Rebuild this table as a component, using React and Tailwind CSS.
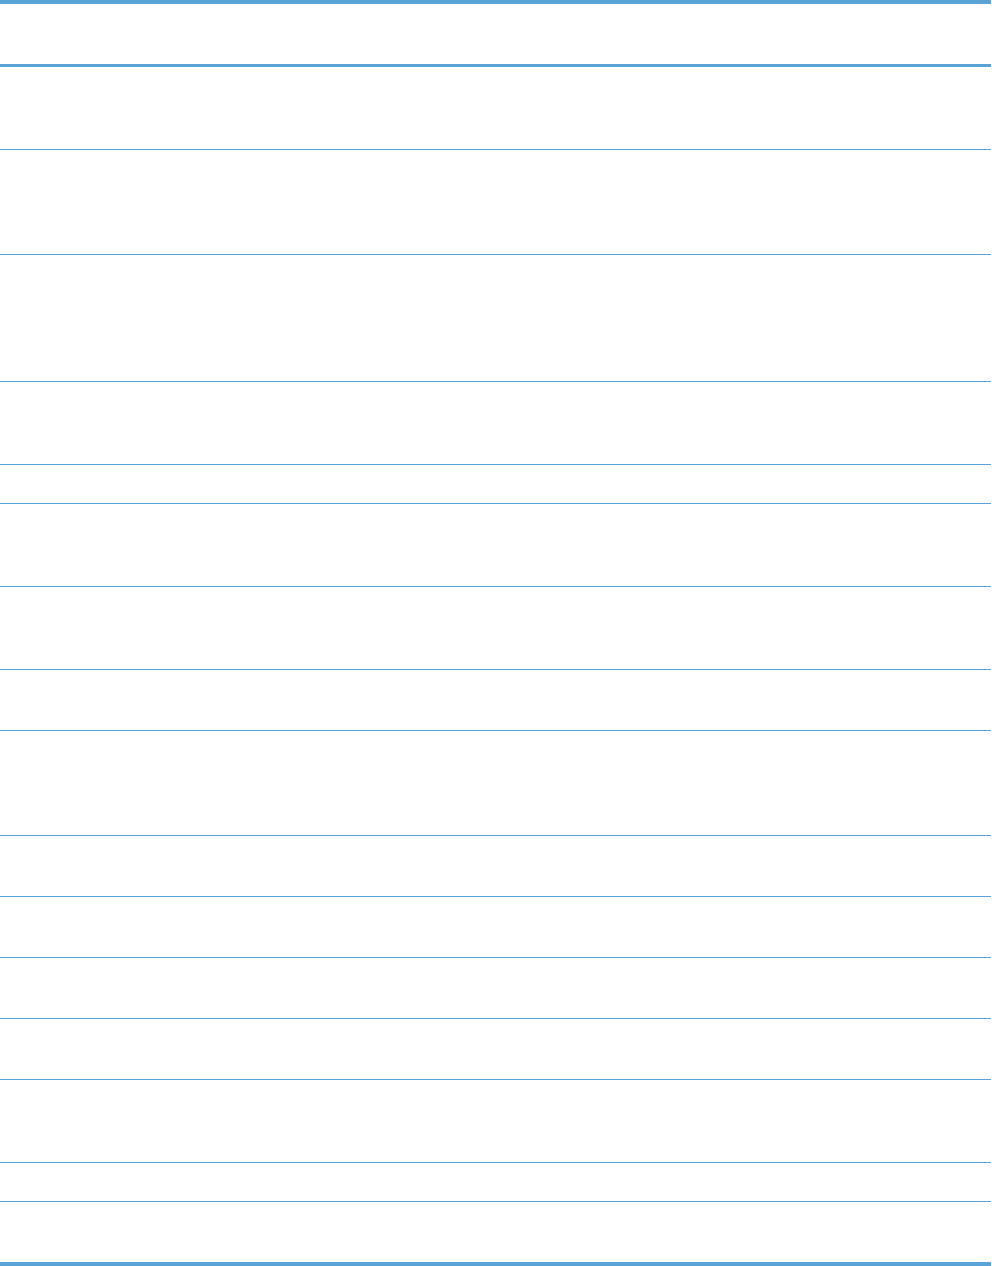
// App.jsx
// Empty ruled table: thick header/footer rules, thin row rules

const rows = [
  'h-[82px]',
  'h-[104px]',
  'h-[126px]',
  'h-[82px]',
  'h-[38px]',
  'h-[82px]',
  'h-[82px]',
  'h-[60px]',
  'h-[104px]',
  'h-[60px]',
  'h-[60px]',
  'h-[60px]',
  'h-[60px]',
  'h-[82px]',
  'h-[38px]',
]

export default function App() {
  return (
    <div className="w-[992px] h-[1266px] bg-white overflow-hidden font-['Liberation_Sans',sans-serif]">
      <div className="w-[991px] flex flex-col">
        {/* header */}
        <div className="h-[60px] border-t-4 border-b-[3px] border-[#5aa3d6] box-content" />
        {/* body rows */}
        {rows.map((h, i) => (
          <div key={i} className={`${h} border-b border-[#5aa3d6] box-content`} />
        ))}
        {/* last row + closing rule */}
        <div className="h-[60px] border-b-4 border-[#5aa3d6] box-content" />
      </div>
    </div>
  )
}
